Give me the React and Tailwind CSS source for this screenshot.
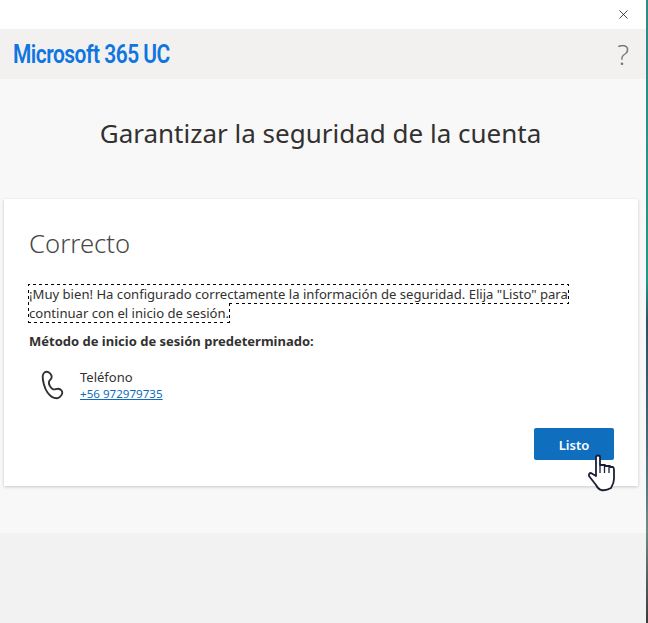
import { X } from "lucide-react";

function PhoneIcon() {
  return (
    <svg width="24" height="30" viewBox="0 0 24 30" fill="none" stroke="#323130" strokeWidth="1.9" strokeLinejoin="round">
      <path d="M1.7 6 C2 3.5 4 1.7 5.7 1.7 C8 1.7 10.7 4.5 10.7 7 C10.7 9 8.5 10 8 11.5 C7.3 13.5 9.5 18.5 12.3 19.3 C14 19.8 15.5 18.5 17.3 18.7 C19.5 19 21.5 21 21.3 23 C21 25.5 18 28.3 15.7 28.3 C13 28.3 9 26 6.5 22.5 C3.5 18.5 1.4 10 1.7 6 Z" />
    </svg>
  );
}

function HandCursor() {
  return (
    <svg width="29" height="38" viewBox="0 0 29 38" fill="white" stroke="#1a1f36" strokeWidth="1.8" strokeLinejoin="round">
      <path d="M9 3 Q9 1.5 11 1.5 Q13 1.5 13 3 L13 11 L18 11 L18 12 L23 12 L23 13 L26 13 Q27 13.5 27 16 L27 25 Q27 29 24 34 Q19 37 14 36 Q11 35 9 31 L2 22 Q1.5 19 4 19 L9 22 Z" />
      <path d="M13 11 V19 M17.5 12 V19 M22 13 V19" fill="none" strokeWidth="1.3" />
    </svg>
  );
}

export default function App() {
  return (
    <div className="relative min-h-[623px] bg-[#f2f2f2] font-['Noto_Sans',sans-serif] text-[#323130] overflow-hidden">
      <div className="h-[29px] bg-white flex items-center justify-end pr-[17px]">
        <X size={15} strokeWidth={1.25} color="#111" />
      </div>
      <div className="h-[50px] bg-[#f2f1f0] flex items-center justify-between pl-[13px] pr-[19px]">
        <span className="font-['Roboto',sans-serif] font-semibold text-[26px] leading-none text-[#0f75e0] tracking-[-0.6px] origin-left scale-x-[0.805] whitespace-nowrap">Microsoft 365 UC</span>
        <span className="font-['Open_Sans',sans-serif] font-light text-[28px] leading-none text-[#6e6c6a]">?</span>
      </div>
      <div className="h-[454px] bg-[#f8f8f8] pt-[38px] px-[4px]">
        <h1 className="text-center text-[26px] leading-[32px] text-[#323130] mb-[50px] pr-[7px]">Garantizar la seguridad de la cuenta</h1>
        <div className="w-[634px] h-[287px] bg-white shadow-[0_1px_3px_rgba(0,0,0,0.2)] pt-[29px] pl-[25px] pr-[24px]">
          <h2 className="text-[25.7px] leading-[32px] font-light text-[#4a4846] mb-[25px]">Correcto</h2>
          <p className="text-[13.1px] leading-[19px] w-[565px]">
            <span className="outline-1 outline-dotted outline-black">¡Muy bien! Ha configurado correctamente la información de seguridad. Elija "Listo" para continuar con el inicio de sesión.</span>
          </p>
          <p className="text-[13px] leading-[19px] font-bold mt-[9px]">Método de inicio de sesión predeterminado:</p>
          <div className="flex items-center mt-[18px] pl-[12px]">
            <PhoneIcon />
            <div className="ml-[15px]">
              <div className="text-[13px] leading-[17px]">Teléfono</div>
              <a className="block text-[11.6px] leading-[15px] text-[#0f6cbd] underline">+56 972979735</a>
            </div>
          </div>
          <div className="flex justify-end mt-[27px]">
            <button className="w-[80px] h-[32px] pt-[3px] bg-[#106ebe] rounded-[2px] text-white text-[13px] font-semibold">Listo</button>
          </div>
        </div>
      </div>
      <div className="absolute left-[587px] top-[454px]"><HandCursor /></div>
      <div className="absolute right-0 top-0 bottom-0 w-[2px] bg-linear-[180deg,#2f8a86_0%,#1f9a85_45%,#2d4f62_52%,#3d6b78_70%,#6f8a85_85%,#3a3a3a_100%]" />
    </div>
  );
}
